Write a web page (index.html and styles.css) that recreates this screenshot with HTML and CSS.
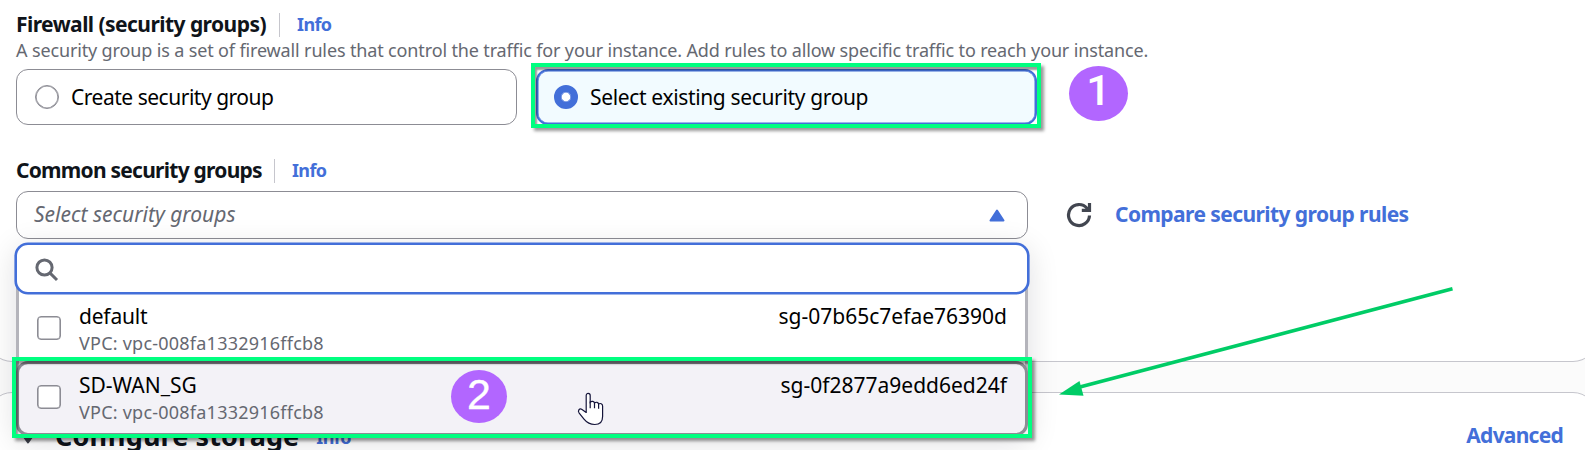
FILE: index.html
```html
<!DOCTYPE html>
<html lang="en">
<head>
<meta charset="utf-8">
<title>Launch an instance</title>
<link rel="stylesheet" href="styles.css">
</head>
<body>
<main class="page">
  <section class="panel network">
    <div class="field-head"><h3 class="label t-firewall">Firewall (security groups)</h3><a class="info">Info</a></div>
    <p class="desc">A security group is a set of firewall rules that control the traffic for your instance. Add rules to allow specific traffic to reach your instance.</p>
    <div class="tiles">
      <div class="tile"><span class="radio"></span><span class="t-create">Create security group</span></div>
      <div class="tile selected"><span class="radio"></span><span class="t-existing">Select existing security group</span>
        <div class="highlight hl-tile"></div>
      </div>
      <div class="badge badge-1"><span>1</span></div>
    </div>
    <div class="field-head second"><h3 class="label t-common">Common security groups</h3><a class="info">Info</a></div>
    <div class="select-row">
      <div class="select">
        <span class="placeholder">Select security groups</span>
        <svg class="caret" width="16" height="13" viewBox="0 0 16 13"><path d="M8 1.5 14.5 11.5H1.5Z" fill="#436fd9" stroke="#436fd9" stroke-width="2" stroke-linejoin="round"/></svg>
        <div class="dropdown">
          <div class="search">
            <svg width="24" height="24" viewBox="0 0 24 24" fill="none" stroke="#656871" stroke-width="3"><circle cx="9.5" cy="9.5" r="7.6"/><path d="M14.6 14.6 22 22"/></svg>
          </div>
          <div class="option">
            <span class="check"></span>
            <div class="option-main"><span class="t-default">default</span><small>VPC: vpc-008fa1332916ffcb8</small></div>
            <span class="sg sg-1">sg-07b65c7efae76390d</span>
          </div>
          <div class="option hovered">
            <span class="check"></span>
            <div class="option-main"><span class="t-sdwan">SD-WAN_SG</span><small>VPC: vpc-008fa1332916ffcb8</small></div>
            <span class="sg sg-2">sg-0f2877a9edd6ed24f</span>
            <div class="highlight hl-option"></div>
            <div class="badge badge-2"><span>2</span></div>
            <svg class="hand" width="28" height="34" viewBox="0 0 28 34"><path d="M9.2 21V3.4C9.2.6 13.2.6 13.2 3.4V10.2C14.6 8.7 17.3 9.3 17.5 11 19 9.6 21.4 10.3 21.6 12 23.2 10.9 25.6 11.7 25.6 14V24.5C25.6 29.8 22.4 32.5 17.8 32.5 12.5 32.5 9.5 30.3 7 27.2L2.2 21.1C.3 18.5 2.5 16 5 17.4L9.2 20.5" fill="#fff" stroke="#14143a" stroke-width="1.2"/><path d="M13.2 9.5V16.3M17.5 11V16.3M21.6 12V16.8" fill="none" stroke="#14143a" stroke-width="1.2"/></svg>
          </div>
        </div>
      </div>
      <svg class="refresh" width="26" height="26" viewBox="0 0 26 26" fill="none" stroke="#424650" stroke-width="3.2"><path d="M23.5 13.5A10.5 10.5 0 1 1 21 6.2L22.5 8"/><path d="M23.5 1V8.3H15.8"/></svg>
      <a class="compare">Compare security group rules</a>
    </div>
  </section>
  <section class="panel storage">
    <svg class="expander" width="14" height="10" viewBox="0 0 14 10"><path d="M2 1.5H12L7 8.5Z" fill="#424650" stroke="#424650" stroke-width="2" stroke-linejoin="round"/></svg>
    <h2 class="storage-title">Configure storage</h2><a class="info">Info</a><a class="advanced">Advanced</a>
  </section>
  <svg class="arrow" width="400" height="112" viewBox="0 0 400 112"><path d="M395.5 3.8 20 102.8" stroke="#00cc66" stroke-width="3.6"/><path d="M2 109.5 22.5 96 26.5 110.8Z" fill="#00cc66"/></svg>
</main>
</body>
</html>
```
FILE: styles.css
```css
* { box-sizing: border-box; }
body { margin: 0; background: #fbfbfb; color: #0f141a; font: 21px/27px "Noto Sans", "Open Sans", sans-serif; }
h2, h3, p { margin: 0; }
.page { position: relative; width: 1585px; height: 450px; overflow: hidden; }
.panel { width: 1609px; margin-left: -12px; background: #fff; border: 1px solid #c6c6cd; border-radius: 24px; }
.network { position: relative; z-index: 1; height: 362px; border-top: 0; border-radius: 0 0 24px 24px; padding: 10px 27px 0; }
.field-head { display: flex; height: 28px; align-items: center; white-space: nowrap; }
.label { font-size: 21px; font-weight: 700; line-height: 27px; padding-right: 13px; height: 27px; }
.t-firewall { letter-spacing: -0.55px; }
.t-common { letter-spacing: -0.75px; padding-right: 12px; }
.field-head .info { border-left: 1px solid #c6c6cd; padding-left: 17px; height: 24px; line-height: 23px; margin-top: 2px; }
.info { color: #436fd9; font-size: 18px; font-weight: 700; letter-spacing: -0.6px; }
.desc { color: #656871; font-size: 18px; line-height: 24px; height: 31px; white-space: nowrap; letter-spacing: -0.14px; }
.tiles { display: flex; gap: 19px; height: 56px; position: relative; }
.tile { width: 501px; height: 56px; border: 1px solid #8c8c94; border-radius: 12px; display: flex; align-items: center; gap: 12px; padding-left: 18px; position: relative; color: #000; white-space: nowrap; }
.radio, .check { width: 24px; height: 24px; border: 1px solid #8c8c94; box-shadow: inset 0 0 0 .6px #8c8c94; background: #fff; }
.radio { border-radius: 50%; }
.t-create { letter-spacing: -0.48px; }
.t-existing { letter-spacing: -0.35px; }
.selected { border: 2px solid #436fd9; box-shadow: inset 0 0 0 .5px #436fd9; background: #f2fbff; padding-left: 16px; }
.selected .radio { border: 7.5px solid #436fd9; box-shadow: inset 0 0 0 .6px #436fd9; }
.highlight { position: absolute; border: 4px solid #00ff80; box-shadow: 3px 3px 3px rgba(0,0,0,.4), inset 2px 3px 2px rgba(0,0,0,.4); }
.hl-tile { left: -7px; top: -8px; width: 510px; height: 65px; }
.badge { position: absolute; border-radius: 50%; background: #b266ff; color: #fff; text-align: center; }
.badge-1 { left: 1053px; top: -3px; width: 59px; height: 55px; font: 500 43px/48px Roboto, sans-serif; }
.second { margin-top: 31px; }
.second .info { margin-top: 1px; }
.select-row { display: flex; margin-top: 7px; align-items: center; height: 48px; white-space: nowrap; }
.select { position: relative; width: 1012px; height: 48px; border: 1px solid #8c8c94; border-radius: 12px; display: flex; align-items: center; justify-content: space-between; padding: 0 22px 0 17px; }
.placeholder { color: #656871; font-style: italic; margin-top: -1px; }
.dropdown { position: absolute; top: 51px; left: -1px; width: 1012px; height: 193px; background: #fff; border: 3px solid #b4b4bb; border-radius: 12px; box-shadow: 0 6px 30px 2px rgba(0,7,22,.12); color: #000; }
.search { margin: -3px -4px 1px; height: 51px; border: 2px solid #436fd9; box-shadow: 0 0 0 .6px #436fd9; border-radius: 13px; background: #fff; padding: 13px 0 0 18px; line-height: 0; }
.option { display: flex; height: 67px; padding: 8px 18px 0 18px; position: relative; }
.check { border-radius: 4px; margin-top: 13px; }
.option-main { display: flex; flex-direction: column; padding-left: 18px; }
.option-main small { font-size: 18px; line-height: 26px; color: #656871; letter-spacing: .23px; }
.t-default { letter-spacing: -0.2px; }
.sg { margin-left: auto; }
.hovered { height: 74px; margin: 0 -3px; padding: 10px 21px 0 21px; background: #f3f2f7; border-radius: 12px; }
.hovered::before { content: ""; position: absolute; inset: -1px 0 0; border: 3px solid #8c8c94; border-radius: 12px; }
.hl-option { left: -4px; top: -5px; width: 1020px; height: 81px; }
.badge-2 { left: 435px; top: 8px; width: 56px; height: 53px; font: 43px/48px "Liberation Sans", sans-serif; -webkit-text-stroke: .3px #fff; }
.hand { position: absolute; left: 561px; top: 30px; }
.refresh { margin-left: 38px; }
.compare { color: #436fd9; font-weight: 700; margin-left: 23px; margin-top: -1px; letter-spacing: -0.58px; }
.storage { margin-top: 30px; height: 150px; display: flex; padding: 24px 33px 0 31px; position: relative; z-index: 0; line-height: 36px; white-space: nowrap; }
.expander { margin: 17px 20px 0 1px; }
.storage-title { font-size: 27px; line-height: 38px; margin-right: 17px; letter-spacing: .1px; }
.storage .info { line-height: 40px; }
.advanced { color: #436fd9; font-weight: 700; margin-left: auto; letter-spacing: -0.75px; }
.arrow { position: absolute; left: 1057px; top: 285px; z-index: 2; }
```
